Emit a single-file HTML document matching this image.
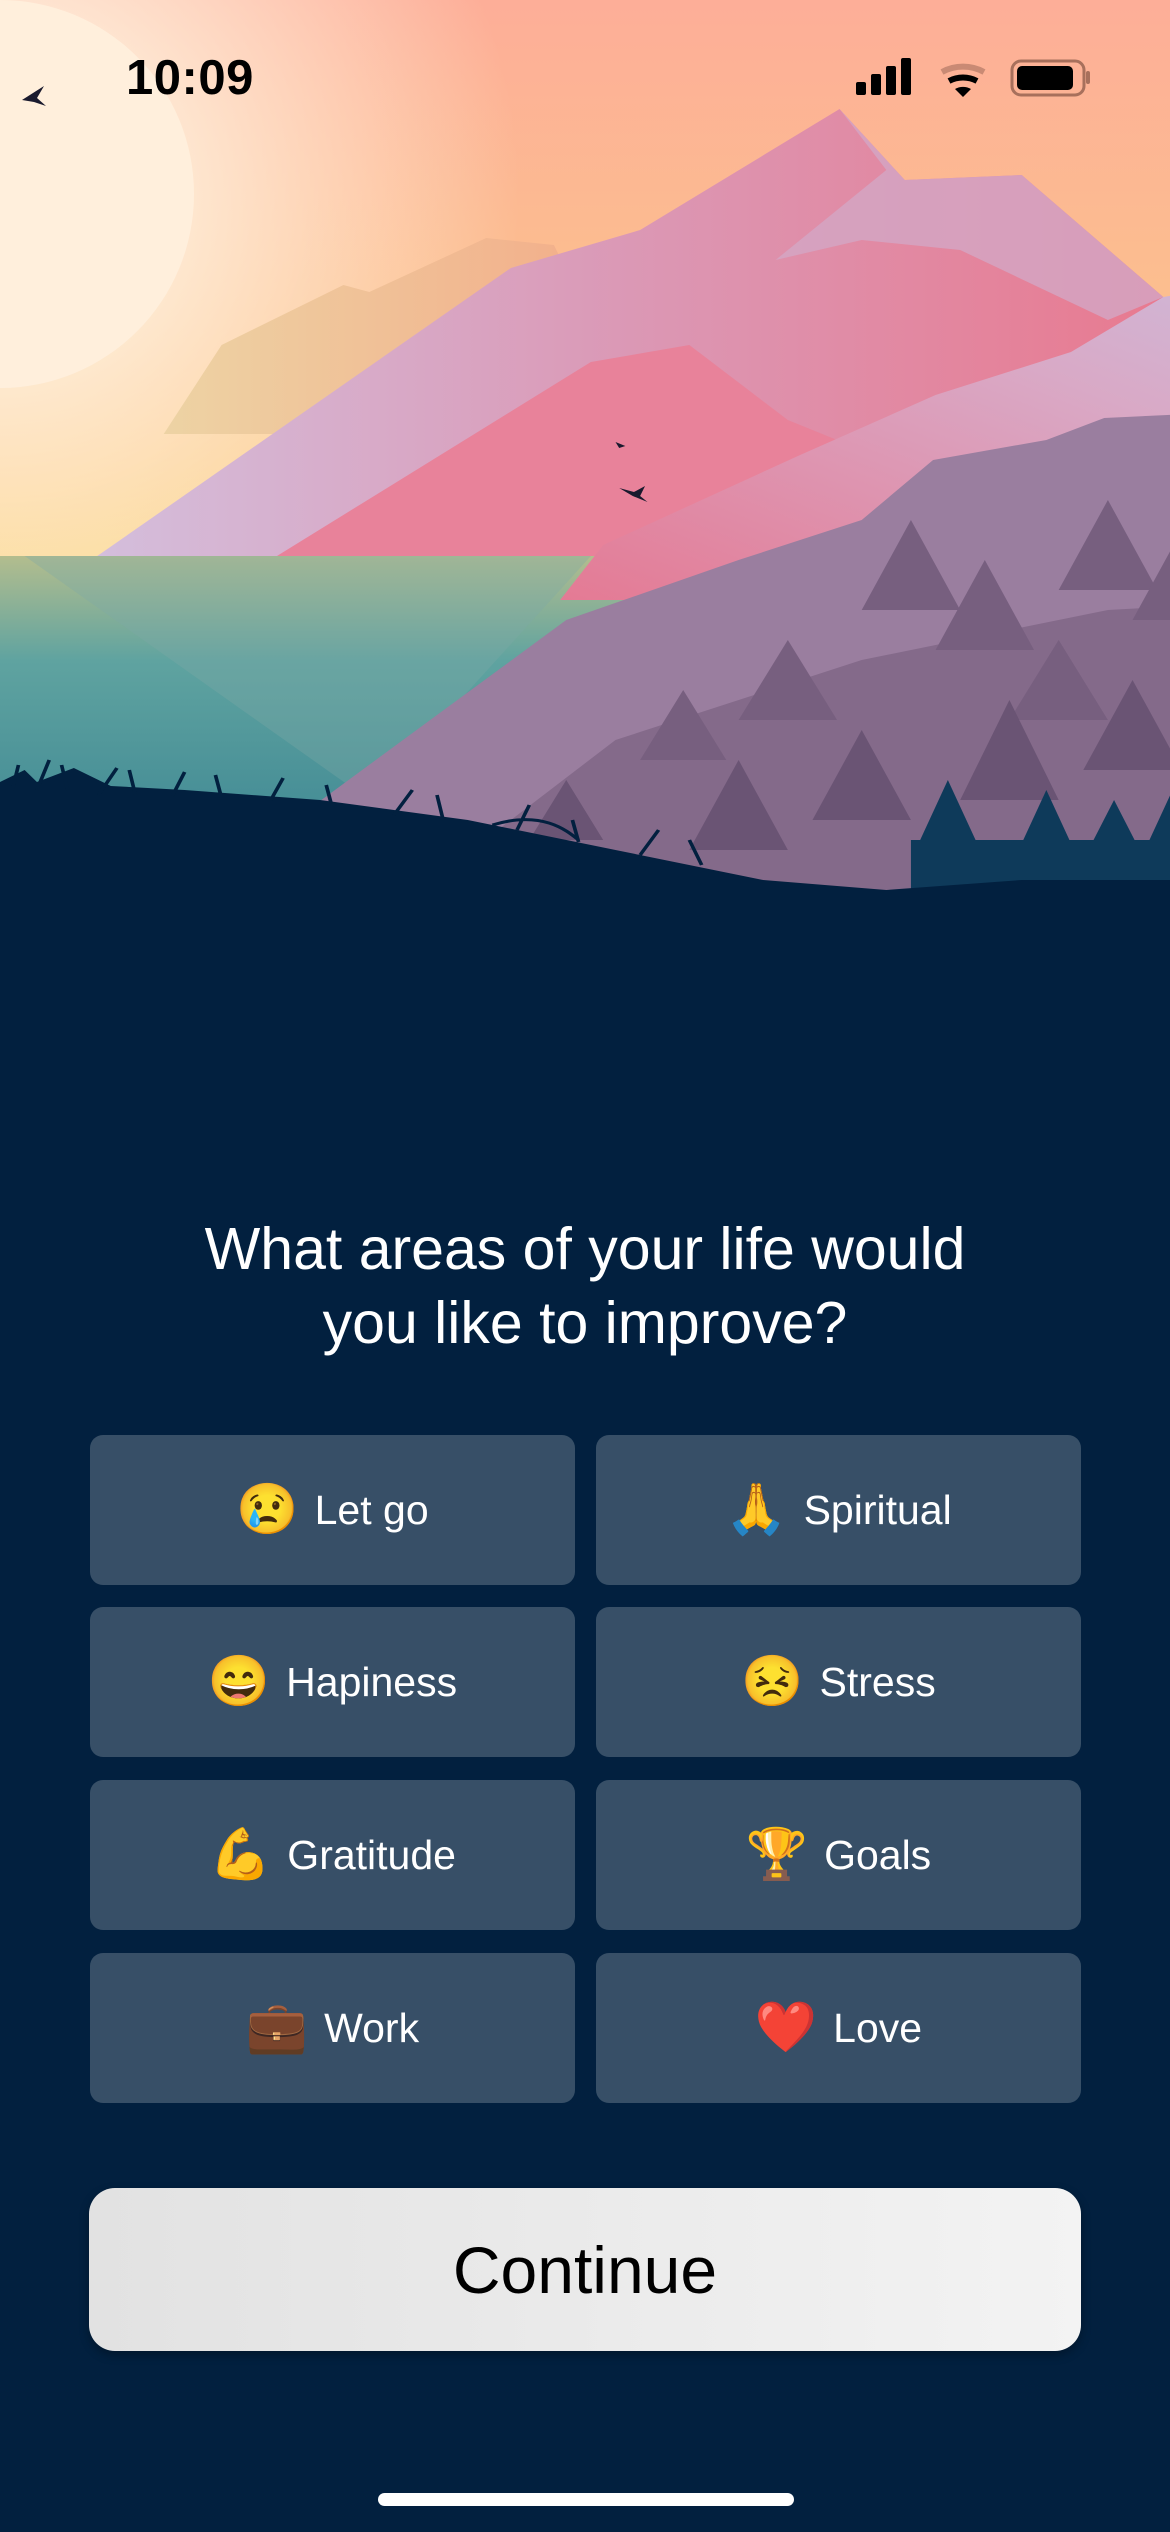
<!DOCTYPE html>
<html><head><meta charset="utf-8">
<style>
*{margin:0;padding:0;box-sizing:border-box}
html,body{width:1170px;height:2532px;background:#02203F;overflow:hidden;font-family:"Liberation Sans",sans-serif}
.scene{position:absolute;left:0;top:0;width:1170px;height:950px}
.time{position:absolute;left:126px;top:50px;font-size:49px;font-weight:600;color:#000;letter-spacing:0.5px}
h1{position:absolute;left:0;width:1170px;top:1212px;text-align:center;color:#fff;font-weight:400;font-size:59px;line-height:74px}
.btn{position:absolute;width:485px;height:150px;background:#374F67;border-radius:13px;color:#fff;font-size:41px;display:flex;align-items:center;justify-content:center}
.btn span.e{font-size:50px;margin-right:16px;font-family:"Noto Color Emoji","DejaVu Sans",sans-serif}
.c{position:absolute;left:89px;top:2188px;width:992px;height:163px;border-radius:26px;background:linear-gradient(90deg,#e2e2e2,#f3f3f3);display:flex;align-items:center;justify-content:center;font-size:66px;color:#000;box-shadow:0 4px 10px rgba(0,0,0,.3)}
.home{position:absolute;left:378px;top:2493px;width:416px;height:13px;border-radius:7px;background:#fff}
</style></head><body>
<svg class="scene" viewBox="0 0 1170 950" xmlns="http://www.w3.org/2000/svg">
<defs>
<linearGradient id="sky" x1="0" y1="0" x2="0" y2="1">
<stop offset="0" stop-color="#FDAE98"/><stop offset="0.4" stop-color="#FCC38C"/><stop offset="0.75" stop-color="#FBE68A"/><stop offset="1" stop-color="#B9D79A"/></linearGradient>
<radialGradient id="glow" cx="0" cy="194" r="520" gradientUnits="userSpaceOnUse">
<stop offset="0.35" stop-color="#FFF3E0" stop-opacity="0.8"/><stop offset="1" stop-color="#FFF3E0" stop-opacity="0"/></radialGradient>
<linearGradient id="water" x1="0" y1="0" x2="0" y2="1">
<stop offset="0" stop-color="#B3BD8E"/><stop offset="0.35" stop-color="#5FA3A0"/><stop offset="1" stop-color="#3E8793"/></linearGradient>
<linearGradient id="mtn" x1="0" y1="0" x2="1" y2="0">
<stop offset="0" stop-color="#D4BEDC"/><stop offset="0.5" stop-color="#DB98B5"/><stop offset="1" stop-color="#E87A90"/></linearGradient>
<linearGradient id="back" x1="0" y1="0" x2="1" y2="0">
<stop offset="0" stop-color="#EDD3A4"/><stop offset="1" stop-color="#F3AE8A"/></linearGradient>
<linearGradient id="lav" x1="0" y1="1" x2="1" y2="0">
<stop offset="0" stop-color="#E47A94"/><stop offset="0.6" stop-color="#D9A9C6"/><stop offset="1" stop-color="#C8C0E2"/></linearGradient>
</defs>
<rect width="1170" height="950" fill="url(#sky)"/>
<rect width="1170" height="950" fill="url(#glow)"/>
<circle cx="0" cy="194" r="194" fill="#FFEFDC"/>
<g transform="scale(1.231,1)">
<rect x="0" y="556" width="1170" height="300" fill="url(#water)"/>
<polygon points="20,556 480,556 300,800" fill="#7FA9A6" opacity="0.35"/>
<polygon points="133,434 180,345 279,285 300,292 395,238 450,245 480,320 480,434" fill="url(#back)"/>
<polygon points="1100,290 1170,270 1170,300" fill="#EDB5A8"/>
<polygon points="79,556 415,268 520,230 682,109 735,180 830,175 945,297 860,400 700,470 560,556" fill="url(#mtn)"/>
<polygon points="682,109 720,170 680,210 630,260 700,240 780,250 900,320 945,297 830,175 735,180" fill="#D3A6C4" opacity="0.8"/>
<polygon points="225,556 480,362 560,345 640,420 720,460 560,556" fill="#E8829A"/>
<polygon points="455,600 490,545 650,455 760,395 870,352 945,297 1170,250 1170,420 1000,440 850,530 700,600" fill="url(#lav)"/>
<polygon points="250,810 460,620 600,560 700,520 758,460 850,440 897,418 1000,412 1170,395 1170,900 250,900" fill="#9A7E9F"/>
<polygon points="330,900 500,740 700,660 900,610 1050,600 1170,570 1170,900" fill="#846A8A"/>
<g fill="#775F7F">
<polygon points="700,610 740,520 780,610"/><polygon points="760,650 800,560 840,650"/><polygon points="860,590 900,500 940,590"/><polygon points="920,620 960,530 1000,620"/><polygon points="1000,560 1040,470 1080,560"/><polygon points="1060,600 1100,500 1140,600"/><polygon points="1120,580 1160,460 1170,470 1170,580"/><polygon points="600,720 640,640 680,720"/><polygon points="520,760 555,690 590,760"/><polygon points="820,720 860,640 900,720"/><polygon points="1130,470 1170,380 1170,470"/>
</g>
<g fill="#6A5474">
<polygon points="560,850 600,760 640,850"/><polygon points="660,820 700,730 740,820"/><polygon points="780,800 820,700 860,800"/><polygon points="880,770 920,680 960,770"/><polygon points="960,780 1000,690 1040,780"/><polygon points="1040,740 1080,650 1120,740"/><polygon points="430,840 460,780 490,840"/>
</g>
<g fill="#0E3A5A">
<polygon points="740,860 770,780 800,860"/><polygon points="820,870 850,790 880,870"/><polygon points="880,860 905,800 930,860"/><polygon points="930,850 960,770 990,850"/><polygon points="990,860 1020,790 1050,860"/><polygon points="1040,830 1075,740 1110,830"/><polygon points="1090,820 1125,720 1160,820"/><polygon points="1140,800 1170,700 1170,800"/><rect x="740" y="840" width="430" height="110"/>
</g>
<path d="M0,782 L20,770 L30,782 L60,768 L90,786 L150,790 L260,800 L380,820 L500,850 L620,880 L720,890 L830,880 L950,880 L1050,885 L1170,900 L1170,950 L0,950 Z" fill="#02203F"/>
<g stroke="#02203F" stroke-width="3" fill="none">
<path d="M10,790 L15,765 M30,790 L40,760 M55,790 L50,765 M80,795 L95,768 M110,795 L105,770 M140,796 L150,772 M180,798 L175,775 M220,800 L230,778 M270,808 L265,785 M320,815 L335,790 M360,820 L355,795 M420,830 L430,805 M470,842 L465,820 M520,855 L535,830 M570,865 L560,840 M400,825 C440,810 460,830 470,840"/>
</g>
<path d="M503,488 L515,492 L524,486 L520,496 L526,502 L514,496 Z" fill="#1a1a2e"/>
<path d="M500,442 L508,446 L503,448 Z" fill="#1a1a2e"/>
</g>
<path d="M22,100 L44,86 L37,98 L46,106 L34,102 Z" fill="#1a1a2e"/>
<!-- status icons -->
<g fill="#000">
<rect x="856" y="82" width="10" height="13" rx="2"/><rect x="871" y="74" width="10" height="21" rx="2"/><rect x="886" y="66" width="10" height="29" rx="2"/><rect x="901" y="58" width="10" height="37" rx="2"/>
</g>
<path d="M942,72 A44,44 0 0 1 984,72" stroke="#C98A74" stroke-width="6" fill="none"/>
<path d="M949,81 A30,30 0 0 1 977,81" stroke="#000" stroke-width="6" fill="none"/>
<path d="M955,89 A16,16 0 0 1 971,89 L963,97 Z" fill="#000"/>
<rect x="1012" y="61" width="72" height="34" rx="9" fill="none" stroke="#A8705C" stroke-width="3"/>
<rect x="1017" y="66" width="56" height="24" rx="5" fill="#000"/>
<rect x="1086" y="71" width="4" height="13" rx="2" fill="#A8705C"/>
</svg>
<div class="time">10:09</div>
<h1>What areas of your life would<br>you like to improve?</h1>
<div class="btn" style="left:90px;top:1435px"><span class="e">😢</span>Let go</div>
<div class="btn" style="left:596px;top:1435px"><span class="e">🙏</span>Spiritual</div>
<div class="btn" style="left:90px;top:1607px"><span class="e">😄</span>Hapiness</div>
<div class="btn" style="left:596px;top:1607px"><span class="e">😣</span>Stress</div>
<div class="btn" style="left:90px;top:1780px"><span class="e">💪</span>Gratitude</div>
<div class="btn" style="left:596px;top:1780px"><span class="e">🏆</span>Goals</div>
<div class="btn" style="left:90px;top:1953px"><span class="e">💼</span>Work</div>
<div class="btn" style="left:596px;top:1953px"><span class="e">❤️</span>Love</div>
<div class="c">Continue</div>
<div class="home"></div>
</body></html>
